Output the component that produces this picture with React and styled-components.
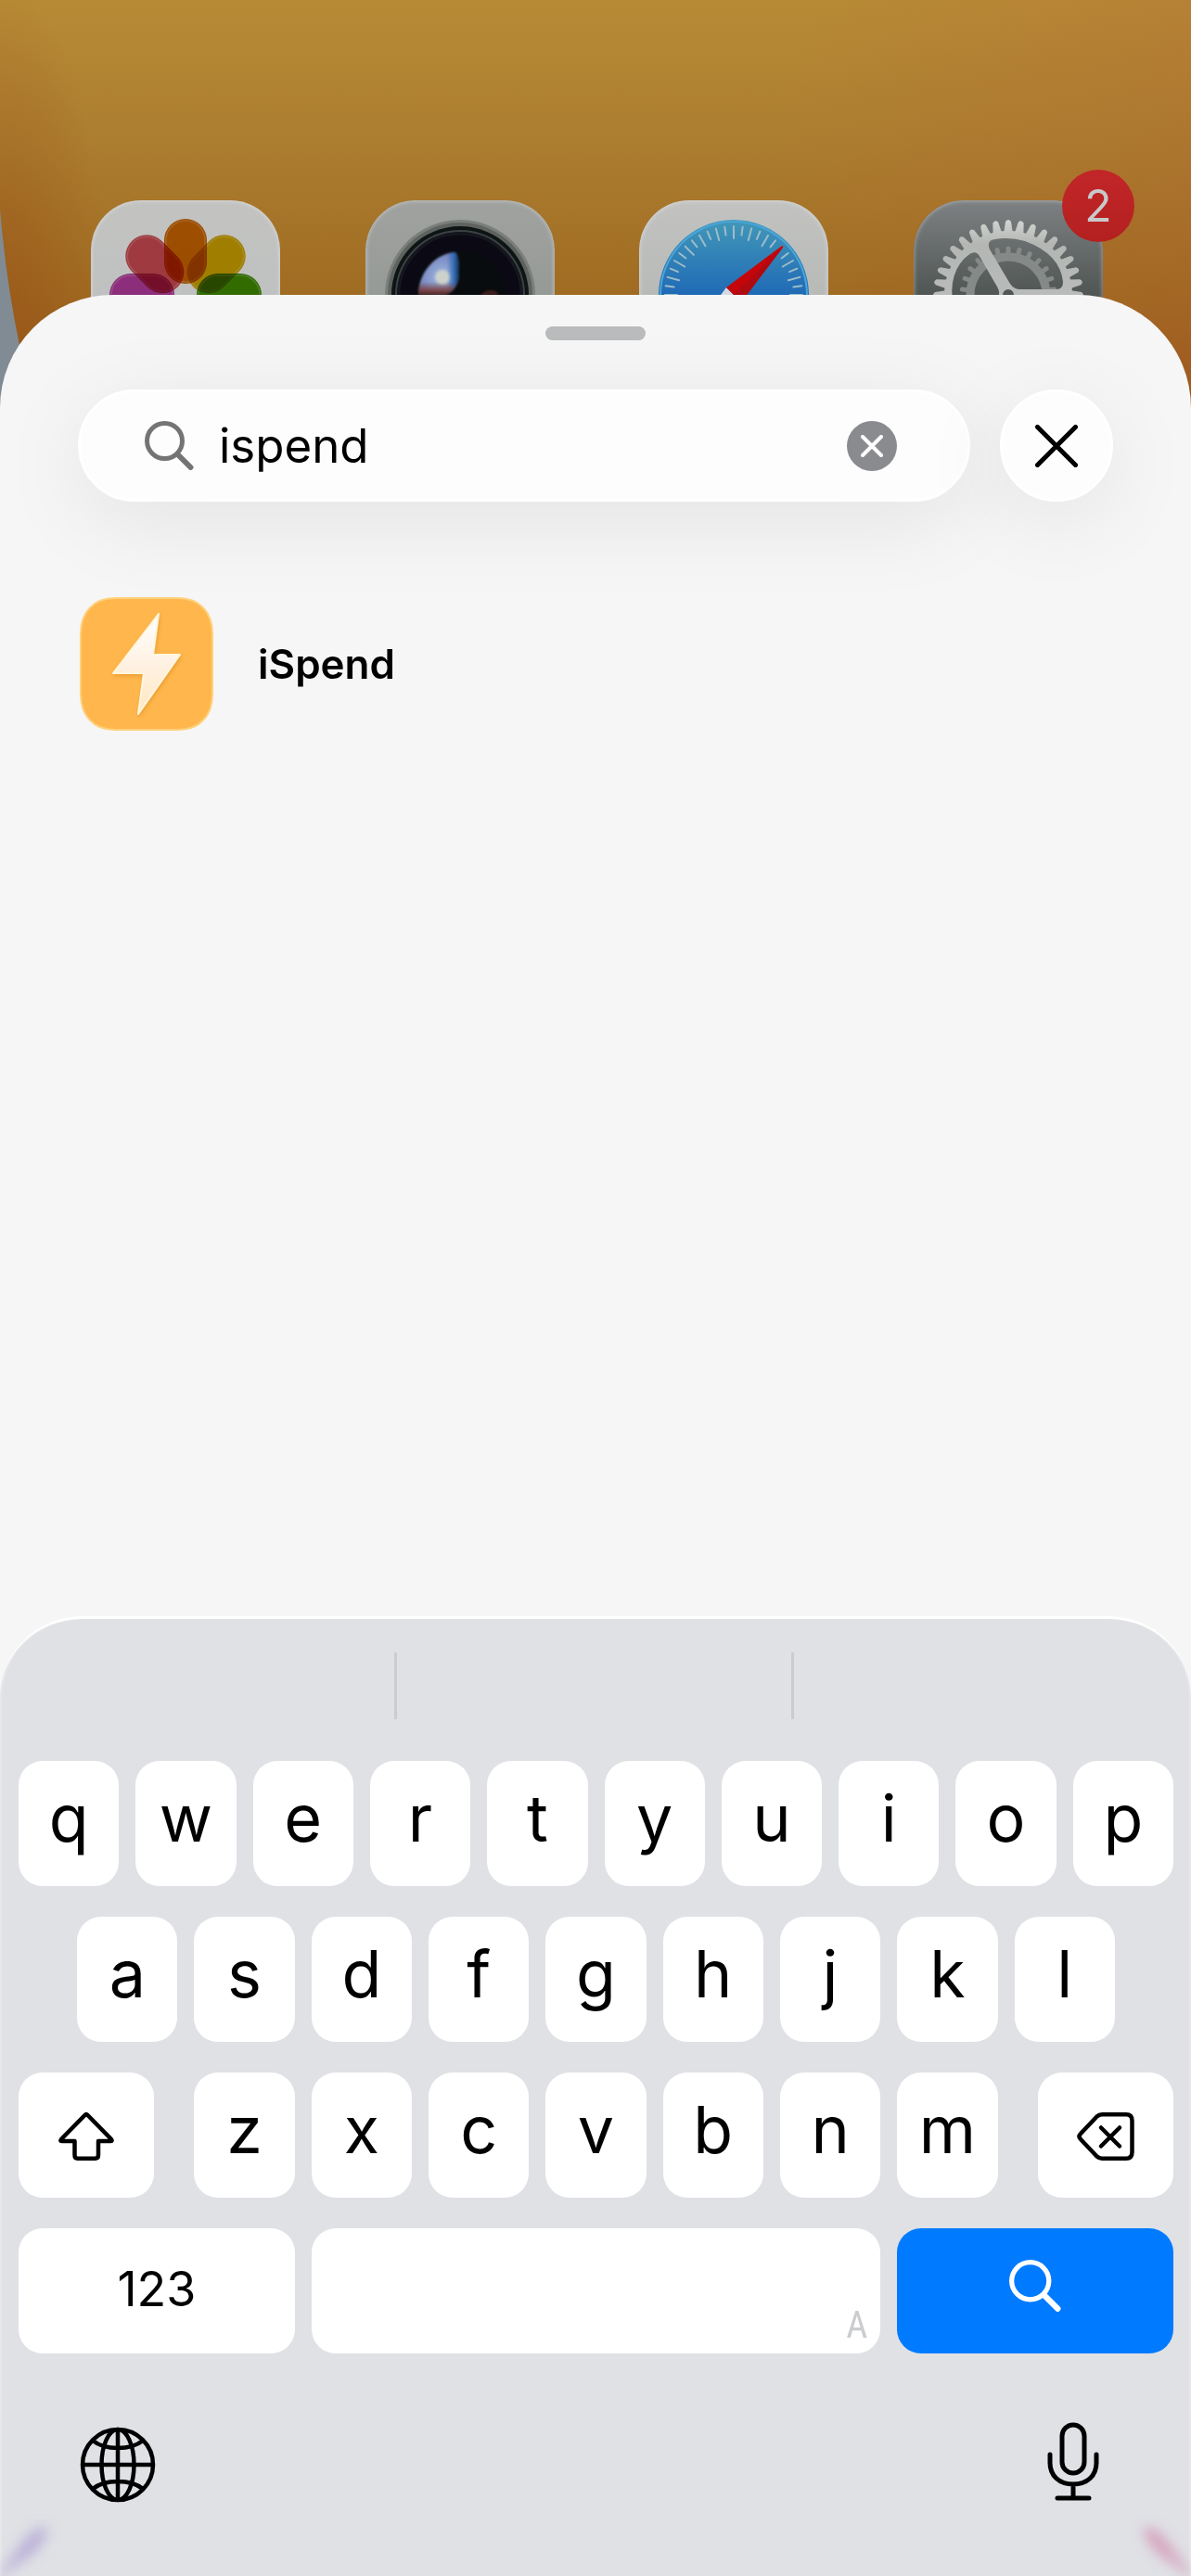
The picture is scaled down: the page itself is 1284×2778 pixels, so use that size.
import React, { useState } from "react";
import styled, { createGlobalStyle } from "styled-components";

const GlobalStyle = createGlobalStyle`
  * {
    box-sizing: border-box;
  }

  body {
    margin: 0;
    font-family: Inter, "Liberation Sans", sans-serif;
    color: #000;
  }

  button {
    margin: 0;
    padding: 0;
    border: 0;
    background: none;
    color: inherit;
    font-family: inherit;
    display: flex;
    align-items: center;
    justify-content: center;
  }

  svg {
    display: block;
  }
`;

const Screen = styled.div`
  position: relative;
  min-height: 100vh;
  display: flex;
  flex-direction: column;
  overflow: hidden;
  background:
    radial-gradient(120px 400px at 0 380px, rgba(150, 72, 18, 0.5), transparent),
    linear-gradient(103deg, transparent 45%, rgba(178, 84, 46, 0.2) 70%, rgba(178, 80, 46, 0.7) 100%),
    linear-gradient(180deg, #b78b36 0, #ab7d2f 160px, #9f6a21 330px, #96561a 460px);
`;

const WallpaperEdge = styled.svg`
  position: absolute;
  top: 0;
  left: 0;
`;

const HomeApps = styled.div`
  position: relative;
  display: flex;
  justify-content: space-between;
  padding: 216px 95px 0 98px;
  margin-bottom: -102px;
`;

const AppTile = styled.div`
  position: relative;
  width: 204px;
  height: 204px;
`;

const AppFace = styled.div`
  height: 100%;
  border-radius: 54px;
  overflow: hidden;
  position: relative;
  background: ${(props) => props.$fill};

  &::after {
    content: "";
    position: absolute;
    inset: 0;
    border-radius: inherit;
    box-shadow: inset 0 0 4px 1px rgba(255, 255, 255, 0.35);
  }
`;

const Badge = styled.span`
  position: absolute;
  top: -33px;
  right: -34px;
  width: 78px;
  height: 78px;
  border-radius: 50%;
  background: linear-gradient(#c22628, #b42020);
  color: #c9c9cb;
  font-size: 48px;
  line-height: 78px;
  text-align: center;
`;

const Sheet = styled.main`
  position: relative;
  flex: 1;
  display: flex;
  flex-direction: column;
  padding-top: 34px;
  border-radius: 122px 122px 0 0;
  background: #f6f6f6;
`;

const Grabber = styled.div`
  align-self: center;
  width: 108px;
  height: 15px;
  border-radius: 8px;
  background: #b9bbbc;
`;

const SearchRow = styled.form`
  display: flex;
  gap: 32px;
  margin: 53px 84px 0;
`;

const SearchField = styled.div`
  flex: 1;
  min-width: 0;
  height: 121px;
  display: flex;
  align-items: center;
  gap: 27px;
  padding: 0 76px 0 69px;
  border: 3px solid #fff;
  border-radius: 61px;
  background: #fdfdfd;
  box-shadow: 0 20px 96px rgba(0, 0, 0, 0.08);
`;

const SearchInput = styled.input`
  flex: 1;
  min-width: 0;
  padding: 0;
  border: 0;
  outline: 0;
  background: none;
  color: #000;
  font-family: inherit;
  font-size: 51px;
  line-height: 64px;
`;

const ClearButton = styled.button`
  width: 54px;
  height: 54px;
  border-radius: 50%;
  background: #8a8b8f;
`;

const CloseButton = styled.button`
  width: 122px;
  height: 121px;
  border: 3px solid #fff;
  border-radius: 61px;
  background: #fdfdfd;
  box-shadow: 0 20px 96px rgba(0, 0, 0, 0.08);
`;

const Results = styled.ul`
  list-style: none;
  margin: 103px 86px 60px;
  padding: 0;
`;

const Result = styled.a`
  display: flex;
  align-items: center;
  gap: 48px;
  color: inherit;
  text-decoration: none;
  font-size: 44px;
  font-weight: 600;
  line-height: 56px;
`;

const Keyboard = styled.section`
  position: relative;
  overflow: hidden;
  margin-top: auto;
  border-top: 3px solid #fff;
  border-radius: 88px 88px 0 0;
  background: #dfe1e5;
  box-shadow: inset 2px 0 0 #e6e7ea, inset -2px 0 0 #e6e7ea;
`;

const Suggestions = styled.div`
  display: grid;
  grid-template-columns: repeat(3, 1fr);
  height: 72px;
  margin: 36px 0 45px;
`;

const Suggestion = styled.div`
  border-right: ${(props) => (props.$last ? "0" : "3px solid #cbccd0")};
`;

const Keys = styled.div`
  display: grid;
  row-gap: 33px;
  padding: 0 19px 0 20px;
`;

const KeyRow = styled.div`
  display: grid;
  grid-template-columns: repeat(20, minmax(0, 1fr));
  column-gap: 18px;
`;

const Key = styled.button`
  grid-column: ${(props) => props.$start || "auto"} / span ${(props) => props.$span || 2};
  height: 135px;
  padding-bottom: 12px;
  border-radius: 26px;
  background: #fff;
  font-size: 70px;
  line-height: 84px;
`;

const SideKey = styled(Key)`
  padding: 2px 0 0;
  margin-left: ${(props) => (props.$right ? "25px" : "0")};
  margin-right: ${(props) => (props.$right ? "0" : "25px")};
`;

const NumbersKey = styled(Key)`
  padding-bottom: 4px;
  font-size: 52px;
`;

const SpaceKey = styled(Key)`
  align-items: flex-end;
  justify-content: flex-end;
  padding: 0 14px 8px 0;
  font-family: "Liberation Sans Narrow", "Roboto Condensed", Roboto, sans-serif;
  font-size: 40px;
  line-height: 44px;
  color: #cbccce;
`;

const SearchKey = styled(Key)`
  background: #007aff;
`;

const BottomBar = styled.div`
  height: 240px;
  display: flex;
  align-items: center;
  justify-content: space-between;
  padding: 0 67px;
`;

const BarButton = styled.button`
  width: 120px;
  height: 120px;
`;

const CornerGlow = styled.svg`
  position: absolute;
  bottom: 0;
  left: ${(props) => (props.$right ? "auto" : "0")};
  right: ${(props) => (props.$right ? "0" : "auto")};
`;

const around = (count) => Array.from({ length: count }, (_, i) => (i * 360) / count);

const PETALS = ["#d06600", "#d4a600", "#428e00", "#2a9a7a", "#2f7fc4", "#5b5fc0", "#bb3da3", "#d24c54"];

function PhotosArt() {
  return (
    <svg width="204" height="204" viewBox="0 0 204 204">
      {PETALS.map((color, i) => (
        <g key={color} transform={`rotate(${i * 45} 102 102)`} style={{ mixBlendMode: "multiply" }}>
          <rect x="79" y="20" width="46" height="70" rx="23" fill={color} />
          <rect x="81" y="22" width="42" height="66" rx="21" fill="none" stroke="#fff" strokeOpacity=".2" strokeWidth="1.5" />
        </g>
      ))}
    </svg>
  );
}

function CameraArt() {
  return (
    <svg width="204" height="204" viewBox="0 0 204 204">
      <defs>
        <radialGradient id="flare" cx="83" cy="83" r="27" gradientUnits="userSpaceOnUse">
          <stop offset="0" stopColor="#cdd2cd" />
          <stop offset=".24" stopColor="#c6cdd2" />
          <stop offset=".36" stopColor="#8fa6d4" />
          <stop offset="1" stopColor="#7580bd" />
        </radialGradient>
        <linearGradient id="flareSide" x1="88" x2="103" gradientUnits="userSpaceOnUse">
          <stop offset="0" stopColor="#1d62b0" stopOpacity="0" />
          <stop offset=".5" stopColor="#1d62b0" stopOpacity=".8" />
          <stop offset="1" stopColor="#08101c" />
        </linearGradient>
        <linearGradient id="flareBase" y1="88" y2="106" x1="0" x2="0" gradientUnits="userSpaceOnUse">
          <stop offset="0" stopColor="#7b3a34" stopOpacity="0" />
          <stop offset=".5" stopColor="#7b3a34" stopOpacity=".85" />
          <stop offset="1" stopColor="#160b0d" />
        </linearGradient>
        <clipPath id="flareClip">
          <path d="M57 100C58 76 77 57 96 56Q101 57 101 78Q101 97 84 103L60 106Z" />
        </clipPath>
        <filter id="soft" x="-20%" y="-20%" width="140%" height="140%">
          <feGaussianBlur stdDeviation="1" />
        </filter>
      </defs>
      <circle cx="102" cy="102" r="81" fill="#7b7f7b" />
      <circle cx="102" cy="102" r="78" fill="#5e635f" />
      <circle cx="102" cy="102" r="74" fill="#0d1414" />
      <circle cx="102" cy="102" r="69" fill="none" stroke="#3c4143" strokeWidth="2" />
      <circle cx="102" cy="102" r="66" fill="#0b0a14" stroke="#15161f" strokeWidth="3" />
      <circle cx="102" cy="102" r="48" fill="#080c0e" />
      <g filter="url(#soft)">
        <g clipPath="url(#flareClip)">
          <rect x="50" y="50" width="60" height="60" fill="url(#flare)" />
          <rect x="50" y="50" width="60" height="60" fill="url(#flareSide)" />
          <rect x="50" y="50" width="60" height="60" fill="url(#flareBase)" />
        </g>
        <circle cx="83" cy="83" r="7" fill="#cdd2cd" />
        <path d="M126 104Q134 96 142 102" fill="none" stroke="#3c1c1e" strokeWidth="5" />
      </g>
    </svg>
  );
}

function SafariArt() {
  return (
    <svg width="204" height="204" viewBox="0 0 204 204">
      <defs>
        <linearGradient id="dial" x1="0" x2="0" y1="0" y2="1">
          <stop offset="0" stopColor="#4298b8" />
          <stop offset=".5" stopColor="#206ab6" />
          <stop offset="1" stopColor="#1a4fa0" />
        </linearGradient>
      </defs>
      <circle cx="102" cy="102" r="81" fill="url(#dial)" />
      <circle cx="102" cy="102" r="79" fill="none" stroke="#4aa5d8" strokeWidth="2" />
      {around(48).map((angle, i) => (
        <line
          key={angle}
          x1="102"
          x2="102"
          y1="28"
          y2={i % 2 ? 37 : 41}
          stroke="#9dbcc8"
          strokeWidth="2"
          strokeLinecap="round"
          transform={`rotate(${angle} 102 102)`}
        />
      ))}
      <path d="M94 94L110 110L48 156Z" fill="#d3dbe4" />
      <path d="M154 49Q156 48 155 51L110 110L94 94Z" fill="#c4060b" />
      <path d="M155 50L110 110L102 102Z" fill="#ae0a10" />
    </svg>
  );
}

function SettingsArt() {
  return (
    <svg width="204" height="204" viewBox="0 0 204 204">
      <defs>
        <linearGradient id="gear" x1="0" x2="0" y1="20" y2="110" gradientUnits="userSpaceOnUse">
          <stop offset="0" stopColor="#d3d5d3" />
          <stop offset=".3" stopColor="#b3b6b3" />
          <stop offset="1" stopColor="#b9bcba" />
        </linearGradient>
        <mask id="gearMask">
          <circle cx="102" cy="102" r="69" fill="#fff" />
          {around(36).map((angle) => (
            <path key={angle} d="M97 36L99 23Q102 19 105 23L107 36Z" fill="#fff" transform={`rotate(${angle} 102 102)`} />
          ))}
          {around(3).map((angle) => (
            <path
              key={angle}
              d="M82 53Q78 43 88 42Q103 39 120 44Q158 58 161 88Q161 96 154 96H115Q108 96 104 90Z"
              transform={`rotate(${angle} 102 102)`}
            />
          ))}
          <circle cx="102" cy="102" r="6" />
        </mask>
      </defs>
      <g stroke="#858a88" fill="none">
        <circle cx="102" cy="102" r="41" strokeWidth="9" />
        {around(26).map((angle) => (
          <line
            key={angle}
            x1="102"
            x2="102"
            y1="52"
            y2="60"
            strokeWidth="5"
            strokeLinecap="round"
            transform={`rotate(${angle} 102 102)`}
          />
        ))}
      </g>
      <rect width="204" height="204" fill="url(#gear)" mask="url(#gearMask)" />
    </svg>
  );
}

function BoltIcon() {
  return (
    <svg width="144" height="144" viewBox="0 0 144 144" aria-hidden="true">
      <defs>
        <linearGradient id="bolt" x1="0" x2="0" y1="0" y2="1">
          <stop offset="0" stopColor="#ffffff" />
          <stop offset=".45" stopColor="#fff3e6" />
          <stop offset="1" stopColor="#ffe6c2" />
        </linearGradient>
        <filter id="boltShadow" x="-20%" y="-20%" width="140%" height="140%">
          <feDropShadow dx="1" dy="2" stdDeviation="2" floodColor="#c87a10" floodOpacity=".4" />
        </filter>
      </defs>
      <path
        d="M38 1H106Q124 1 133.500 12Q143 22 143 40V104Q143 122 133.500 132Q124 143 106 143H38Q20 143 10.500 132Q1 122 1 104V40Q1 22 10.500 12Q20 1 38 1Z"
        fill="#ffb64d"
        stroke="#ffd07a"
        strokeWidth="2"
      />
      <path
        d="M85 18L79 62H108L63 126L69 82H36Z"
        fill="url(#bolt)"
        stroke="#fff6dc"
        strokeWidth="2"
        strokeLinejoin="round"
        filter="url(#boltShadow)"
      />
    </svg>
  );
}

function SearchIcon({ size = 53, color }) {
  return (
    <svg width={size} height={size} viewBox="0 0 53 53" fill="none" stroke={color} strokeLinecap="round" aria-hidden="true">
      <circle cx="21.500" cy="21.500" r="19" strokeWidth="5" />
      <path d="M35.500 36L49.500 50" strokeWidth="6" />
    </svg>
  );
}

function CrossIcon({ size, color, weight }) {
  const end = size - weight / 2;
  return (
    <svg width={size} height={size} fill="none" stroke={color} strokeWidth={weight} strokeLinecap="round" aria-hidden="true">
      <path d={`M${weight / 2} ${weight / 2}L${end} ${end}M${end} ${weight / 2}L${weight / 2} ${end}`} />
    </svg>
  );
}

function ShiftIcon() {
  return (
    <svg width="60" height="52" viewBox="0 0 60 52" fill="none" stroke="#000" strokeWidth="4.500" strokeLinejoin="round">
      <path d="M28.500 3Q30 1.500 31.500 3L57 29Q58.500 31 56.500 31H43V46Q43 49.700 39.500 49.700H20.500Q17.500 49.700 17.500 46V31H3.500Q1.500 31 3 29Z" />
    </svg>
  );
}

function DeleteIcon() {
  return (
    <svg width="62" height="52" viewBox="0 0 62 52" fill="none" stroke="#000" strokeWidth="4.500" strokeLinecap="round" strokeLinejoin="round">
      <path d="M27 2.300H53Q59.500 2.300 59.500 9V43Q59.500 49.700 53 49.700H27Q24 49.700 21.500 47.500L4 29Q1 26 4 23L21.500 4.500Q24 2.300 27 2.300Z" />
      <path d="M26 16.500L46 36.500M46 16.500L26 36.500" />
    </svg>
  );
}

function GlobeIcon() {
  return (
    <svg width="82" height="82" viewBox="0 0 82 82" fill="none" stroke="#000" strokeWidth="4.500">
      <circle cx="41" cy="41" r="38" />
      <ellipse cx="41" cy="41" rx="17.500" ry="38" />
      <path d="M41 3V79M3 41H79M14 15Q24 23 41 23Q58 23 68 15M14 67Q24 59 41 59Q58 59 68 67" />
    </svg>
  );
}

function MicIcon() {
  return (
    <svg width="58" height="92" viewBox="0 0 58 92" fill="none" stroke="#000" strokeWidth="5" strokeLinecap="round">
      <rect x="17" y="3" width="24" height="52" rx="12" />
      <path d="M4 35V44C4 58 14 67 29 67C44 67 54 58 54 44V35M29 67V82M12 82H46" />
    </svg>
  );
}

const apps = [
  { name: "Photos", fill: "linear-gradient(#c2c3c1, #bfc1c0 50%)", Art: PhotosArt },
  { name: "Camera", fill: "linear-gradient(#a0a29f, #969a96 50%)", Art: CameraArt },
  { name: "Safari", fill: "linear-gradient(#c2c3c1, #b8bab8 50%)", Art: SafariArt },
  { name: "Settings", fill: "linear-gradient(#7e8183, #505654 50%)", Art: SettingsArt, badge: 2 },
];

export default function App() {
  const [query, setQuery] = useState("ispend");

  return (
    <>
      <GlobalStyle />
      <Screen>
        <WallpaperEdge width="40" height="520" aria-hidden="true">
          <path d="M0 225Q6 300 21 372L34 520H0Z" fill="#818b94" />
        </WallpaperEdge>
        <HomeApps>
          {apps.map(({ name, fill, Art, badge }) => (
            <AppTile key={name} role="img" aria-label={name}>
              <AppFace $fill={fill}>
                <Art />
              </AppFace>
              {badge && <Badge>{badge}</Badge>}
            </AppTile>
          ))}
        </HomeApps>

        <Sheet>
          <Grabber />
          <SearchRow role="search" onSubmit={(e) => e.preventDefault()}>
            <SearchField>
              <label htmlFor="query" aria-label="Search">
                <SearchIcon color="#747475" />
              </label>
              <SearchInput id="query" type="text" value={query} onChange={(e) => setQuery(e.target.value)} />
              <ClearButton type="button" aria-label="Clear" onClick={() => setQuery("")}>
                <CrossIcon size={24} color="#fff" weight={4} />
              </ClearButton>
            </SearchField>
            <CloseButton type="button" aria-label="Close">
              <CrossIcon size={46} color="#000" weight={5} />
            </CloseButton>
          </SearchRow>

          <Results>
            <li>
              <Result href="#ispend">
                <BoltIcon />
                iSpend
              </Result>
            </li>
          </Results>

          <Keyboard>
            <CornerGlow width="110" height="110" viewBox="0 0 110 110" aria-hidden="true">
              <defs>
                <filter id="glow" x="-50%" y="-50%" width="200%" height="200%">
                  <feGaussianBlur stdDeviation="7" />
                </filter>
              </defs>
              <path d="M-6 116L24 74Q40 54 50 58Q54 66 38 84Z" fill="#a48fce" fillOpacity=".6" filter="url(#glow)" />
            </CornerGlow>
            <CornerGlow $right width="110" height="110" viewBox="0 0 110 110" aria-hidden="true">
              <path d="M116 116L86 74Q70 54 60 58Q56 66 72 84Z" fill="#cc6a98" fillOpacity=".5" filter="url(#glow)" />
            </CornerGlow>
            <Suggestions>
              <Suggestion />
              <Suggestion />
              <Suggestion $last />
            </Suggestions>
            <Keys>
              <KeyRow>
                {[..."qwertyuiop"].map((letter) => (
                  <Key key={letter} type="button">{letter}</Key>
                ))}
              </KeyRow>
              <KeyRow>
                {[..."asdfghjkl"].map((letter, i) => (
                  <Key key={letter} type="button" $start={i * 2 + 2}>{letter}</Key>
                ))}
              </KeyRow>
              <KeyRow>
                <SideKey type="button" aria-label="Shift" $span={3}>
                  <ShiftIcon />
                </SideKey>
                {[..."zxcvbnm"].map((letter) => (
                  <Key key={letter} type="button">{letter}</Key>
                ))}
                <SideKey type="button" aria-label="Delete" $span={3} $right>
                  <DeleteIcon />
                </SideKey>
              </KeyRow>
              <KeyRow>
                <NumbersKey type="button" $span={5}>123</NumbersKey>
                <SpaceKey type="button" aria-label="Space" $span={10}>A</SpaceKey>
                <SearchKey type="button" aria-label="Search" $span={5}>
                  <SearchIcon size={56} color="#fff" />
                </SearchKey>
              </KeyRow>
            </Keys>
            <BottomBar>
              <BarButton type="button" aria-label="Next keyboard">
                <GlobeIcon />
              </BarButton>
              <BarButton type="button" aria-label="Dictate">
                <MicIcon />
              </BarButton>
            </BottomBar>
          </Keyboard>
        </Sheet>
      </Screen>
    </>
  );
}
